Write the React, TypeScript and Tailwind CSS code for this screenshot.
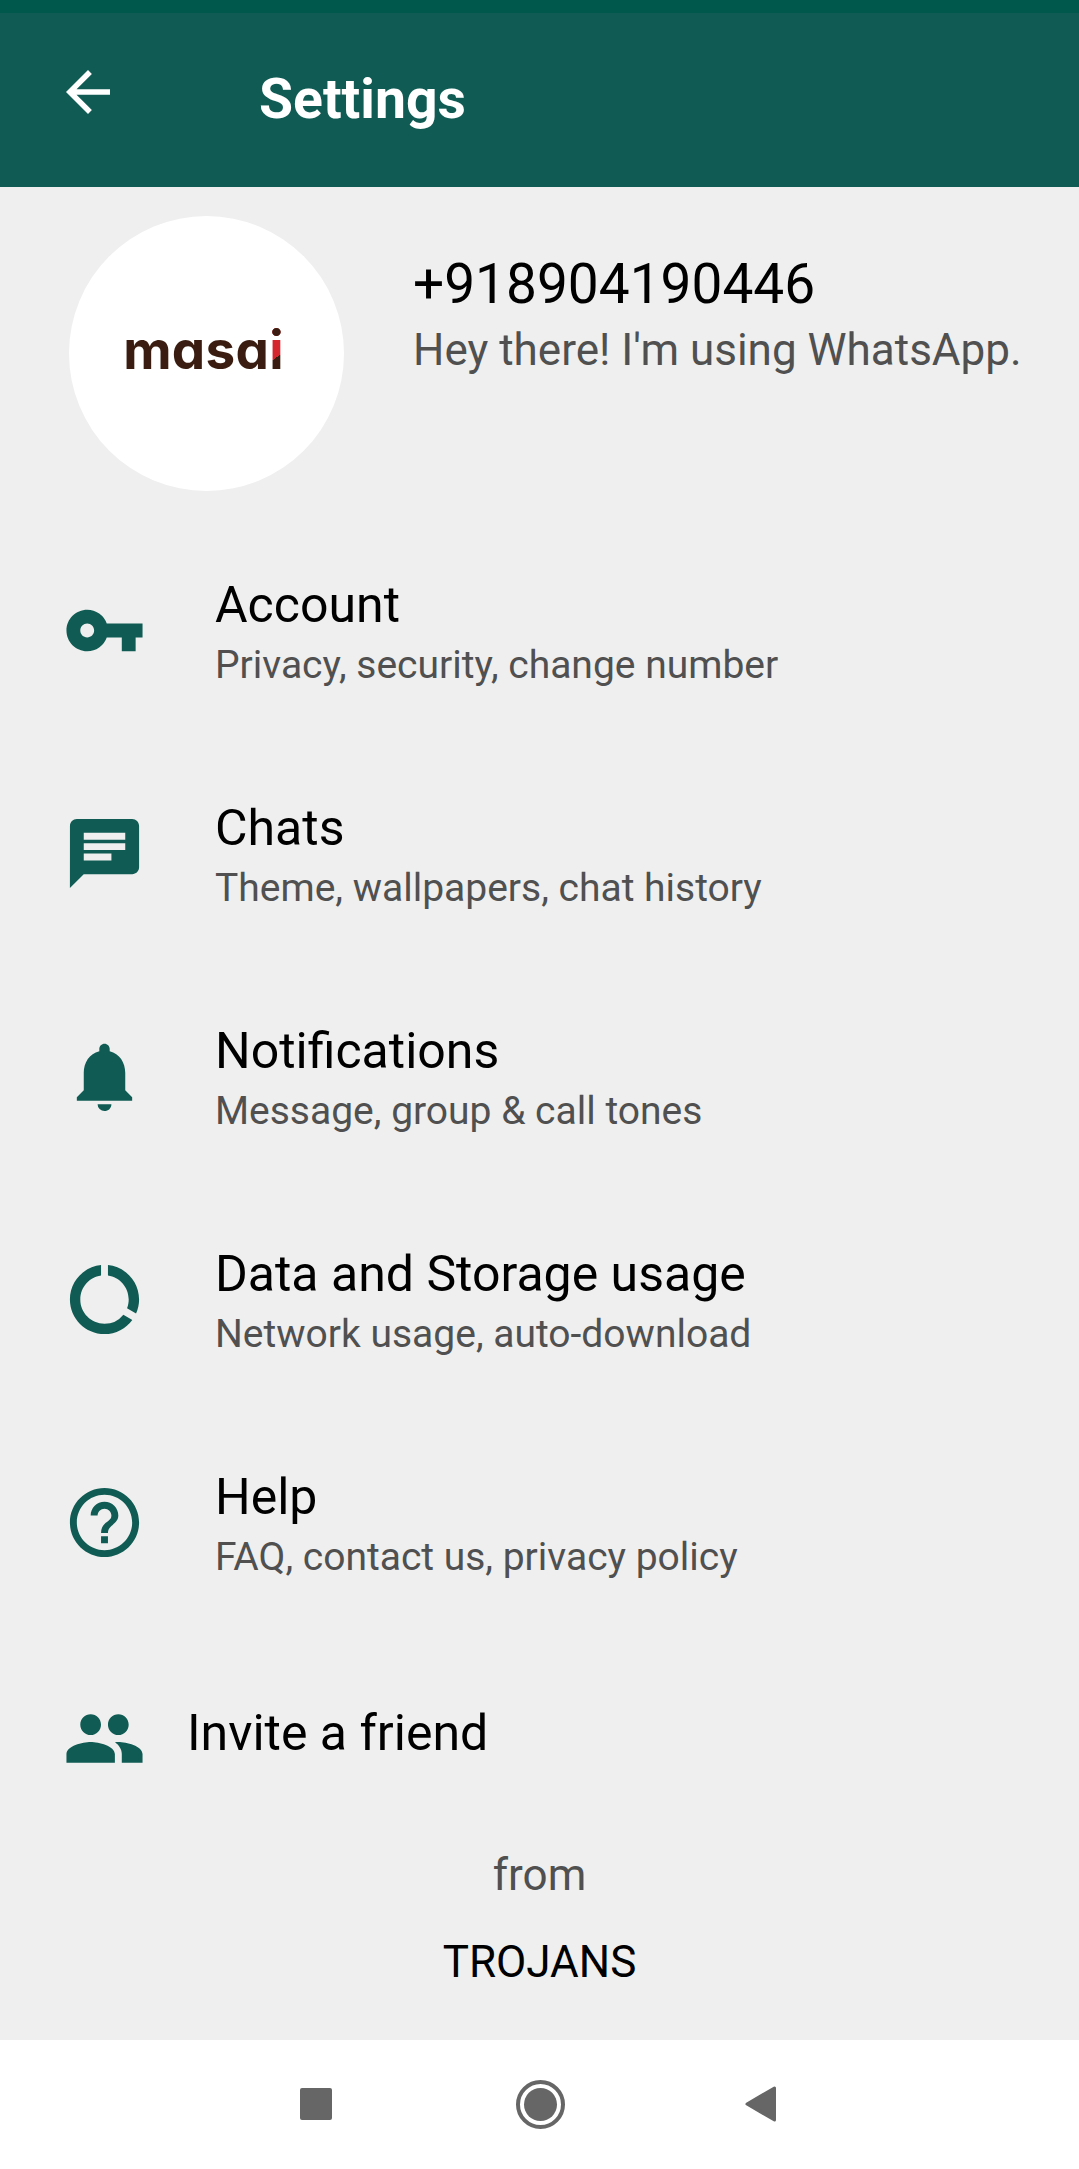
import type { ReactNode } from "react";
import {
  MdArrowBack,
  MdVpnKey,
  MdChat,
  MdNotifications,
  MdDataUsage,
  MdHelpOutline,
  MdPeople,
} from "react-icons/md";

type Item = { icon: ReactNode; title: string; subtitle: string };

const items: Item[] = [
  { icon: <MdVpnKey size={83} />, title: "Account", subtitle: "Privacy, security, change number" },
  { icon: <MdChat size={83} />, title: "Chats", subtitle: "Theme, wallpapers, chat history" },
  { icon: <MdNotifications size={83} />, title: "Notifications", subtitle: "Message, group & call tones" },
  { icon: <MdDataUsage size={83} />, title: "Data and Storage usage", subtitle: "Network usage, auto-download" },
  { icon: <MdHelpOutline size={83} />, title: "Help", subtitle: "FAQ, contact us, privacy policy" },
];

function Header() {
  return (
    <header className="flex h-[187px] items-start border-t-[13px] border-[#00574b] bg-[#105c54] pl-[55px] text-white">
      <MdArrowBack size={66} className="mt-[46px]" />
      <h1 className="mt-[54px] ml-[138px] text-[55.3px] leading-[66px] font-bold">Settings</h1>
    </header>
  );
}

function Avatar() {
  return (
    <div className="flex size-[275px] items-center justify-center rounded-full bg-white">
      <div className="mt-[-8px] mr-[6px] font-['Inter',sans-serif] text-[53px] leading-[64px] font-bold tracking-[0.3px] text-[#3a1d10] [font-feature-settings:'cv11']">
        masa
        <span className="bg-[linear-gradient(to_bottom,#3a1d10_33%,transparent_33%),linear-gradient(145deg,#d4262c_60%,#3a1d10_60%)] bg-clip-text text-transparent">
          i
        </span>
      </div>
    </div>
  );
}

function Profile() {
  return (
    <section className="flex h-[354px] items-start pt-[29px] pl-[69px]">
      <Avatar />
      <div className="mt-[36px] ml-[69px] whitespace-nowrap">
        <div className="text-[55px] leading-[64px] text-black">+918904190446</div>
        <div className="text-[44px] leading-[68px] text-[#505050]">Hey there! I'm using WhatsApp.</div>
      </div>
    </section>
  );
}

function Row({ icon, title, subtitle }: Item) {
  return (
    <li className="flex h-[223px] items-start pt-[35px] pl-[63px]">
      <span className="mt-[13px] text-[#105c54]">{icon}</span>
      <div className="ml-[69px] whitespace-nowrap">
        <div className="text-[50px] leading-[58px] text-black">{title}</div>
        <div className="text-[39px] leading-[62px] text-[#505050]">{subtitle}</div>
      </div>
    </li>
  );
}

function NavBar() {
  return (
    <nav className="flex h-[129px] items-center bg-white pb-[1px] pl-[300px]">
      <span className="size-[32px] rounded-[2px] bg-[#666666]" />
      <span className="ml-[184px] flex size-[49px] items-center justify-center rounded-full border-4 border-[#666666]">
        <span className="size-[33px] rounded-full bg-[#666666]" />
      </span>
      <svg className="ml-[180px]" width="31" height="36" viewBox="0 0 31 36">
        <path d="M2 18 29.5 2v32z" fill="#666" stroke="#666" strokeWidth="3" strokeLinejoin="round" />
      </svg>
    </nav>
  );
}

export default function App() {
  return (
    <div className="flex h-[2169px] w-[1079px] flex-col overflow-hidden bg-[#efefef] font-['Roboto',sans-serif]">
      <Header />
      <Profile />
      <ul>
        {items.map((item) => (
          <Row key={item.title} {...item} />
        ))}
      </ul>
      <div className="flex h-[193px] items-start pt-[41px] pl-[63px]">
        <MdPeople size={83} className="text-[#105c54]" />
        <div className="mt-[7px] ml-[41px] text-[50px] leading-[58px] text-black">Invite a friend</div>
      </div>
      <footer className="flex grow flex-col items-center gap-[35px] text-[44px] leading-[52px]">
        <div className="text-[#505050]">from</div>
        <div className="text-black">TROJANS</div>
      </footer>
      <NavBar />
    </div>
  );
}
